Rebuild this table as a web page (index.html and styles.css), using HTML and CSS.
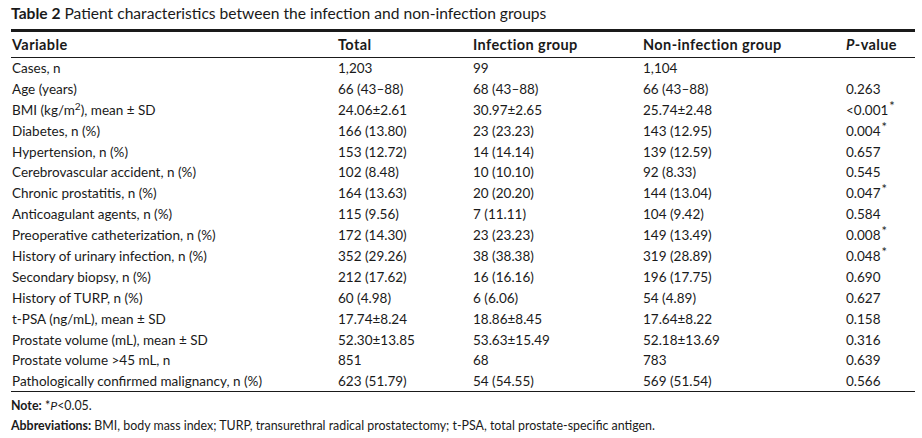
FILE: index.html
```html
<!DOCTYPE html>
<html lang="en">
<head>
<meta charset="utf-8">
<title>Table 2</title>
<link rel="stylesheet" href="styles.css">
</head>
<body>
<div class="page">
  <p class="caption"><b>Table 2</b> Patient characteristics between the infection and non-infection groups</p>
  <table class="data">
    <colgroup>
      <col class="c1"><col class="c2"><col class="c3"><col class="c4"><col class="c5">
    </colgroup>
    <thead>
      <tr><th>Variable</th><th>Total</th><th>Infection group</th><th>Non-infection group</th><th><i>P</i>-value</th></tr>
    </thead>
    <tbody>
      <tr><td>Cases, n</td><td>1,203</td><td>99</td><td>1,104</td><td></td></tr>
      <tr><td>Age (years)</td><td>66 (43–88)</td><td>68 (43–88)</td><td>66 (43–88)</td><td>0.263</td></tr>
      <tr><td>BMI (kg/m<sup>2</sup>), mean ± SD</td><td>24.06±2.61</td><td>30.97±2.65</td><td>25.74±2.48</td><td>&lt;0.001<sup class="star">*</sup></td></tr>
      <tr><td>Diabetes, n (%)</td><td>166 (13.80)</td><td>23 (23.23)</td><td>143 (12.95)</td><td>0.004<sup class="star">*</sup></td></tr>
      <tr><td>Hypertension, n (%)</td><td>153 (12.72)</td><td>14 (14.14)</td><td>139 (12.59)</td><td>0.657</td></tr>
      <tr><td>Cerebrovascular accident, n (%)</td><td>102 (8.48)</td><td>10 (10.10)</td><td>92 (8.33)</td><td>0.545</td></tr>
      <tr><td>Chronic prostatitis, n (%)</td><td>164 (13.63)</td><td>20 (20.20)</td><td>144 (13.04)</td><td>0.047<sup class="star">*</sup></td></tr>
      <tr><td>Anticoagulant agents, n (%)</td><td>115 (9.56)</td><td>7 (11.11)</td><td>104 (9.42)</td><td>0.584</td></tr>
      <tr><td>Preoperative catheterization, n (%)</td><td>172 (14.30)</td><td>23 (23.23)</td><td>149 (13.49)</td><td>0.008<sup class="star">*</sup></td></tr>
      <tr><td>History of urinary infection, n (%)</td><td>352 (29.26)</td><td>38 (38.38)</td><td>319 (28.89)</td><td>0.048<sup class="star">*</sup></td></tr>
      <tr><td>Secondary biopsy, n (%)</td><td>212 (17.62)</td><td>16 (16.16)</td><td>196 (17.75)</td><td>0.690</td></tr>
      <tr><td>History of TURP, n (%)</td><td>60 (4.98)</td><td>6 (6.06)</td><td>54 (4.89)</td><td>0.627</td></tr>
      <tr><td>t-PSA (ng/mL), mean ± SD</td><td>17.74±8.24</td><td>18.86±8.45</td><td>17.64±8.22</td><td>0.158</td></tr>
      <tr><td>Prostate volume (mL), mean ± SD</td><td>52.30±13.85</td><td>53.63±15.49</td><td>52.18±13.69</td><td>0.316</td></tr>
      <tr><td>Prostate volume &gt;45 mL, n</td><td>851</td><td>68</td><td>783</td><td>0.639</td></tr>
      <tr><td>Pathologically confirmed malignancy, n (%)</td><td>623 (51.79)</td><td>54 (54.55)</td><td>569 (51.54)</td><td>0.566</td></tr>
    </tbody>
  </table>
  <p class="note note-first"><b>Note:</b> *<i>P</i>&lt;0.05.</p>
  <p class="note"><b>Abbreviations:</b> BMI, body mass index; TURP, transurethral radical prostatectomy; t-PSA, total prostate-specific antigen.</p>
</div>
</body>
</html>
```

FILE: styles.css
```css
html, body {
  margin: 0;
  padding: 0;
  background: #ffffff;
}

.page {
  width: 904px;
  padding: 4px 0 0 11px;
  font-family: Lato, "Open Sans", sans-serif;
  color: #1a1a1a;
}

.caption {
  margin: 0;
  font-size: 15.6px;
  line-height: 18px;
  height: 25px;
}

.caption b {
  font-weight: 700;
}

.data {
  width: 904px;
  border-collapse: collapse;
  table-layout: fixed;
  font-size: 13.5px;
}

.c1 { width: 326px; }
.c2 { width: 135px; }
.c3 { width: 170px; }
.c4 { width: 203px; }
.c5 { width: 70px; }

.data thead tr {
  border-top: 3px solid #1a1a1a;
  border-bottom: 1px solid #1a1a1a;
}

.data th {
  text-align: left;
  font-weight: 700;
  font-size: 14.5px;
  letter-spacing: 0.4px;
  height: 25px;
  padding: 0 0 0 1px;
  vertical-align: middle;
}

.data tbody tr {
  height: 20.9px;
}

.data tbody tr:last-child {
  border-bottom: 1px solid #1a1a1a;
}

.data td {
  padding: 0 0 0 1px;
  vertical-align: middle;
  white-space: nowrap;
}

.data sup {
  font-size: 0.75em;
  line-height: 0;
  vertical-align: 0.45em;
}

.data sup.star {
  font-size: 0.95em;
  vertical-align: 0.3em;
  margin-left: 1px;
}

.note {
  margin: 0;
  font-size: 12.4px;
  line-height: 20px;
}

.note-first {
  margin-top: 4px;
}
```
